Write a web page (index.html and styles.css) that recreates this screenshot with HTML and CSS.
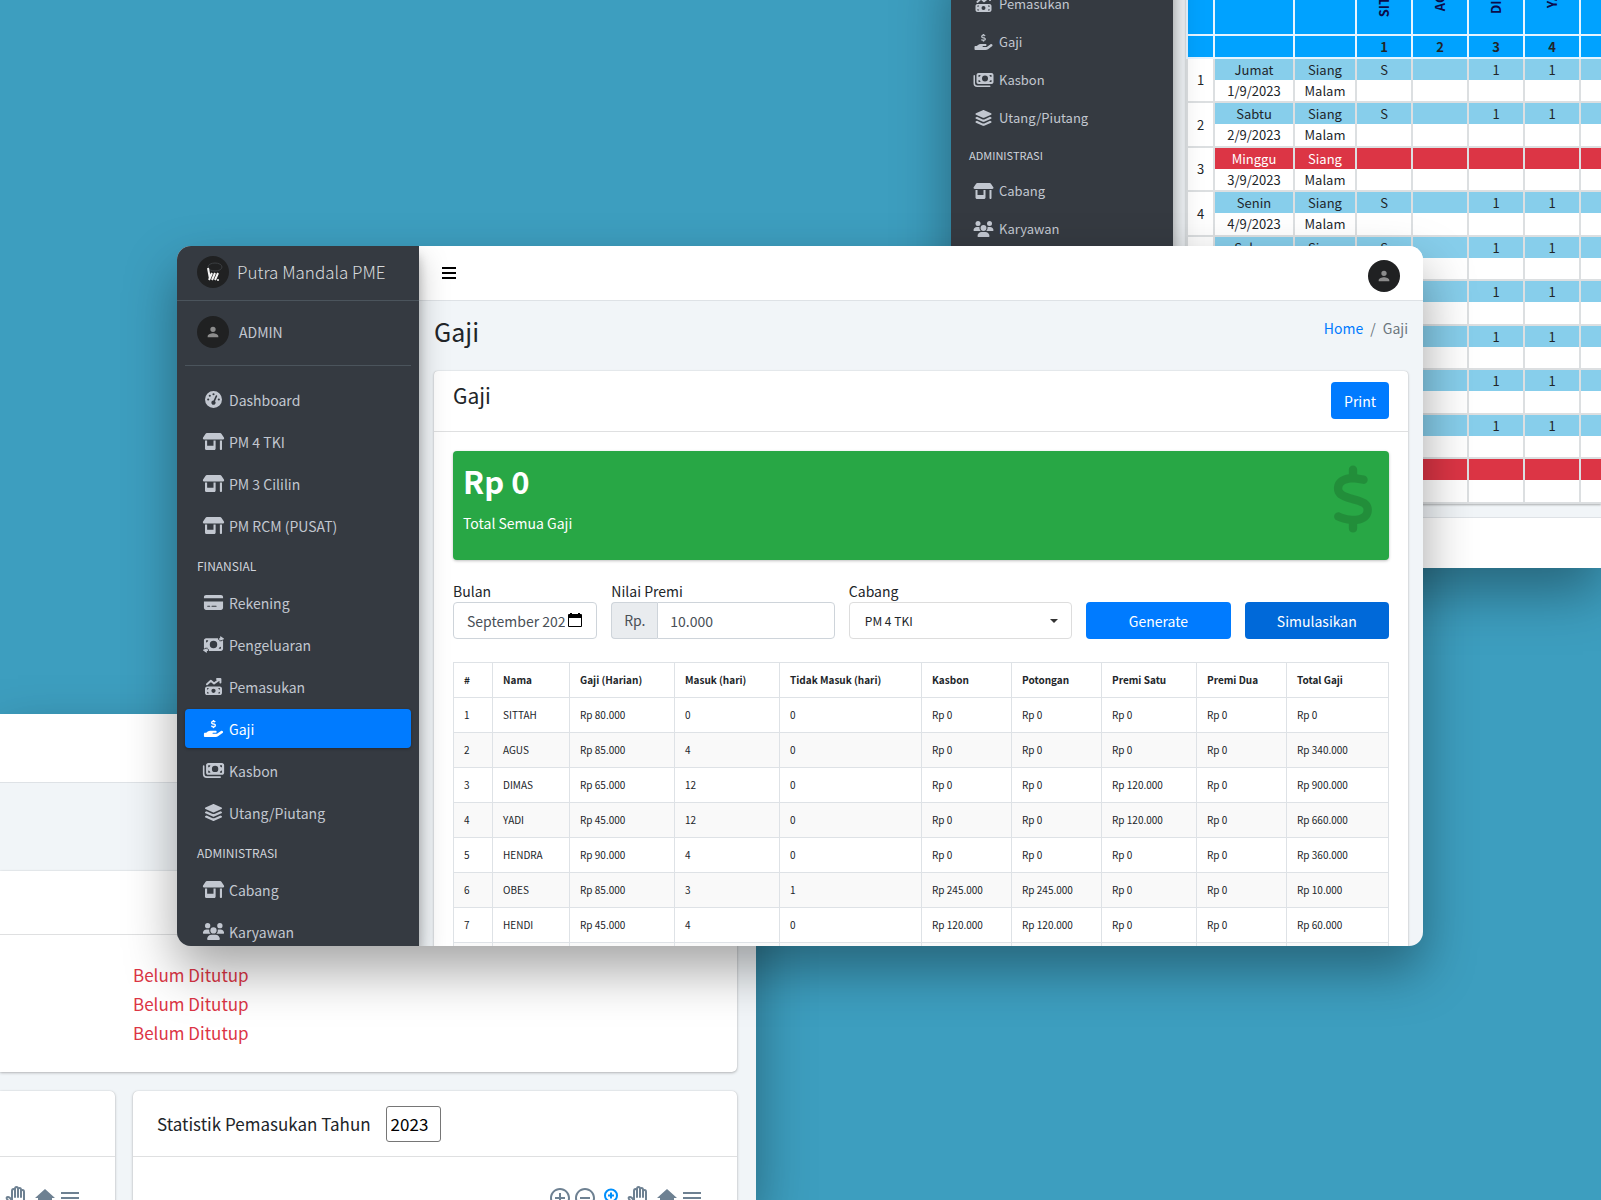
FILE: index.html
```html
<!DOCTYPE html>
<html lang="id">
<head>
<meta charset="utf-8">
<meta name="viewport" content="width=device-width, initial-scale=1">
<title>Putra Mandala PME - Gaji</title>
<link rel="stylesheet" href="styles.css">
</head>
<body>
<svg class="sprite" aria-hidden="true">
  <symbol id="i-gauge" viewBox="0 0 512 512"><path d="M0 256a256 256 0 1 1 512 0A256 256 0 1 1 0 256zM288 96a32 32 0 1 0 -64 0 32 32 0 1 0 64 0zM256 416c35.300 0 64-28.700 64-64c0-17.400-6.900-33.100-18.100-44.600L366 161.700c5.300-12.100-.2-26.300-12.300-31.600s-26.300 .2-31.600 12.300L257.900 288c-.6 0-1.300 0-1.900 0c-35.300 0-64 28.700-64 64s28.700 64 64 64zM176 144a32 32 0 1 0 -64 0 32 32 0 1 0 64 0zM96 288a32 32 0 1 0 0-64 32 32 0 1 0 0 64zm352-32a32 32 0 1 0 -64 0 32 32 0 1 0 64 0z"/></symbol>
  <symbol id="i-shop" viewBox="0 0 640 512"><path d="M36.800 192H603.200c20.300 0 36.800-16.500 36.800-36.800c0-7.300-2.200-14.400-6.200-20.400L558.200 21.400C549.300 8 534.400 0 518.300 0H121.700c-16 0-31 8-39.900 21.400L6.200 134.700c-4 6.100-6.200 13.200-6.200 20.400C0 175.500 16.500 192 36.800 192zM64 224V384v80c0 26.500 21.500 48 48 48H336c26.500 0 48-21.500 48-48V384 224H320V384H128V224H64zm448 0V480c0 17.700 14.300 32 32 32s32-14.300 32-32V224H512z"/></symbol>
  <symbol id="i-card" viewBox="0 0 576 512"><path d="M64 32C28.700 32 0 60.700 0 96v32H576V96c0-35.300-28.700-64-64-64H64zM576 224H0V416c0 35.300 28.700 64 64 64H512c35.300 0 64-28.700 64-64V224zM112 352h64c8.800 0 16 7.200 16 16s-7.200 16-16 16H112c-8.800 0-16-7.200-16-16s7.200-16 16-16zm112 16c0-8.800 7.200-16 16-16H368c8.800 0 16 7.200 16 16s-7.200 16-16 16H240c-8.800 0-16-7.200-16-16z"/></symbol>
  <symbol id="i-transfer" viewBox="0 0 640 512"><path fill-rule="evenodd" d="M96 64H455V112H500V160H560L592 130C604 140 608 150 608 160V384C608 419 579 448 544 448H185V400H140V352H80L48 382C36 372 32 362 32 352V128C32 93 61 64 96 64ZM96 128V192C131 192 160 163 160 128ZM544 384V320C509 320 480 349 480 384ZM320 144A112 112 0 1 0 320 368A112 112 0 1 0 320 144Z"/><path d="M535 7L631 79Q643 88 631 97L535 137Q520 143 520 125V112H500Q480 112 480 88T500 64H520V22Q520 2 535 7ZM105 375L9 415Q-3 424 9 433L105 505Q120 511 120 490V448H145Q165 448 165 424T145 400H120V387Q120 369 105 375Z"/></symbol>
  <symbol id="i-trend" viewBox="0 0 512 512"><path fill-rule="evenodd" d="M64 256H448C483 256 512 285 512 320V448C512 483 483 512 448 512H64C29 512 0 483 0 448V320C0 285 29 256 64 256ZM64 304V352C90 352 112 330 112 304ZM64 464H112C112 438 90 416 64 416ZM448 304H400C400 330 422 352 448 352ZM448 464V416C422 416 400 438 400 464ZM256 320A64 64 0 1 0 256 448A64 64 0 1 0 256 320Z"/><path fill="none" stroke="currentColor" stroke-width="60" stroke-linecap="round" stroke-linejoin="round" d="M60 190L176 86L272 166L440 42M362 30H464V132"/></symbol>
  <symbol id="i-dollar" viewBox="0 0 320 512"><path d="M160 0c17.700 0 32 14.300 32 32V67.700c1.600 .2 3.100 .4 4.700 .7c.4 .1 .7 .1 1.100 .2l48 8.800c17.400 3.200 28.900 19.900 25.700 37.200s-19.900 28.900-37.200 25.700l-47.500-8.700c-31.300-4.600-58.900-1.500-78.300 6.200s-27.200 18.300-29 28.100c-2 10.700-.5 16.700 1.200 20.400c1.800 3.900 5.500 8.300 12.800 13.200c16.300 10.700 41.300 17.700 73.700 26.300l2.900 .8c28.600 7.600 63.600 16.800 89.600 33.800c14.200 9.300 27.600 21.900 35.900 39.500c8.500 17.900 10.300 37.900 6.400 59.200c-6.900 38-33.100 63.400-65.600 76.700c-13.700 5.600-28.600 9.200-44.400 11V480c0 17.700-14.300 32-32 32s-32-14.300-32-32V445.100c-.4-.1-.9-.1-1.300-.2l-.2 0 0 0c-24.400-3.800-64.500-14.300-91.500-26.300c-16.100-7.200-23.400-26.100-16.200-42.200s26.100-23.400 42.200-16.200c20.900 9.300 55.300 18.500 75.200 21.600c31.900 4.700 58.200 2 76-5.300c16.900-6.900 24.600-16.900 26.800-28.900c1.900-10.600 .4-16.700-1.300-20.400c-1.900-4-5.600-8.400-13-13.300c-16.400-10.700-41.500-17.700-74-26.300l-2.800-.7 0 0C119.400 279.300 84.400 270 58.400 253c-14.200-9.300-27.500-22-35.800-39.600c-8.400-17.900-10.100-37.900-6.100-59.200C23.700 116 52.300 91.200 84.800 78.300c13.300-5.300 27.900-8.900 43.200-11V32c0-17.700 14.300-32 32-32z"/></symbol>
  <symbol id="i-hand" viewBox="0 0 576 512"><path d="M559.700 392.200c17.800-13.100 21.600-38.100 8.500-55.900s-38.100-21.600-55.900-8.500L392.600 416H272c-8.800 0-16-7.200-16-16s7.200-16 16-16h16 64c17.700 0 32-14.300 32-32s-14.300-32-32-32H288 272 193.700c-29.100 0-57.300 9.900-80 28L68.800 384H32c-17.700 0-32 14.300-32 32v64c0 17.700 14.300 32 32 32H192 352.500c29 0 57.300-9.300 80.700-26.500l126.600-93.300z"/><use href="#i-dollar" x="208" y="-6" width="160" height="256" stroke="currentColor" stroke-width="24"/></symbol>
  <symbol id="i-bills" viewBox="0 0 640 512"><path fill-rule="evenodd" d="M160 32H576C611 32 640 61 640 96V320C640 355 611 384 576 384H160C125 384 96 355 96 320V96C96 61 125 32 160 32ZM160 96V160C195 160 224 131 224 96ZM160 320H224C224 285 195 256 160 256ZM576 96H512C512 131 541 160 576 160ZM576 320V256C541 256 512 285 512 320ZM368 112A96 96 0 1 0 368 304A96 96 0 1 0 368 112Z"/><path fill="none" stroke="currentColor" stroke-width="48" stroke-linecap="round" d="M24 120V360Q24 456 120 456H520"/></symbol>
  <symbol id="i-layers" viewBox="0 0 512 512"><path d="M232.500 5.200c14.900-6.900 32.100-6.900 47 0l218.600 101c8.500 3.900 13.900 12.400 13.900 21.800s-5.400 17.900-13.900 21.800l-218.600 101c-14.900 6.900-32.100 6.900-47 0L13.900 149.800C5.400 145.800 0 137.300 0 128s5.400-17.900 13.900-21.800L232.500 5.200zM48.100 218.400l164.300 75.900c27.700 12.800 59.600 12.800 87.300 0l164.300-75.900 34.100 15.800c8.500 3.900 13.900 12.400 13.900 21.800s-5.400 17.900-13.900 21.800l-218.600 101c-14.900 6.900-32.100 6.900-47 0L13.900 277.800C5.400 273.800 0 265.300 0 256s5.400-17.900 13.900-21.800l34.200-15.800zM13.900 362.200l34.200-15.800 164.300 75.900c27.700 12.800 59.600 12.800 87.300 0l164.300-75.900 34.100 15.800c8.500 3.900 13.900 12.400 13.900 21.800s-5.400 17.900-13.900 21.800l-218.600 101c-14.900 6.900-32.100 6.900-47 0L13.900 405.800C5.400 401.800 0 393.300 0 384s5.400-17.900 13.900-21.800z"/></symbol>
  <symbol id="i-users" viewBox="0 0 640 512"><circle cx="144" cy="80" r="80"/><circle cx="512" cy="80" r="80"/><circle cx="320" cy="224" r="94"/><path d="M0 299C0 240 48 192 107 192H149C165 192 180 195 194 202C184 250 202 294 236 320H21C10 320 0 310 0 299ZM404 320C438 294 456 250 446 202C460 195 475 192 491 192H533C592 192 640 240 640 299C640 310 630 320 619 320ZM128 485C128 412 188 352 261 352H379C452 352 512 412 512 485C512 500 500 512 485 512H155C140 512 128 500 128 485Z"/></symbol>
  <symbol id="i-user" viewBox="0 0 24 24"><path d="M12 12a4 4 0 1 0 0-8 4 4 0 0 0 0 8zm0 2c-3 0-8 1.500-8 4.500V20h16v-1.500c0-3-5-4.500-8-4.500z"/></symbol>
  <symbol id="i-bars" viewBox="0 0 14 12"><path d="M0 0h14v2H0zM0 5h14v2H0zM0 10h14v2H0z"/></symbol>
  <symbol id="i-calendar" viewBox="0 0 14 14"><path fill-rule="evenodd" d="M2 0H4V1H10V0H12V1H13Q14 1 14 2V13Q14 14 13 14H1Q0 14 0 13V2Q0 1 1 1H2ZM1 5V13H13V5Z"/></symbol>
  <symbol id="i-plus" viewBox="0 0 24 24"><path d="M13 7h-2v4H7v2h4v4h2v-4h4v-2h-4V7zm-1-5C6.500 2 2 6.500 2 12s4.500 10 10 10 10-4.500 10-10S17.500 2 12 2zm0 18c-4.400 0-8-3.600-8-8s3.600-8 8-8 8 3.600 8 8-3.600 8-8 8z"/></symbol>
  <symbol id="i-minus" viewBox="0 0 24 24"><path d="M7 11v2h10v-2H7zm5-9C6.500 2 2 6.500 2 12s4.500 10 10 10 10-4.500 10-10S17.500 2 12 2zm0 18c-4.400 0-8-3.600-8-8s3.600-8 8-8 8 3.600 8 8-3.600 8-8 8z"/></symbol>
  <symbol id="i-zoom" viewBox="0 0 24 24"><path fill="none" stroke="currentColor" stroke-width="2" d="M16 15L21 21M11 6.500V12.500M8 9.500H14M11 3.500a6 6 0 1 0 0 12a6 6 0 1 0 0-12Z"/></symbol>
  <symbol id="i-pan" viewBox="0 0 24 24"><path fill="none" stroke="currentColor" stroke-width="2" stroke-linejoin="round" d="M8 15V5Q8 3 9.500 3T11 5V11V3Q11 1 12.500 1T14 3V11V3Q14 2 15.500 2T17 4V11V5Q17 4 18.500 4T20 6V16Q20 23 13 23Q9 23 7 19L3 13Q2 11 4 11Q6 11 8 15"/></symbol>
  <symbol id="i-home" viewBox="0 0 24 24"><path d="M10 20v-6h4v6h5v-8h3L12 3 2 12h3v8z"/></symbol>
  <symbol id="i-menu" viewBox="0 0 24 24"><path d="M3 18h18v-2H3v2zm0-5h18v-2H3v2zm0-7v2h18V6H3z"/></symbol>
</svg>

<div class="desktop">

  <section class="window window-stats">
    <div class="topbar"></div>
    <div class="stats-body">
      <div class="panel status-panel">
        <div class="panel-head"></div>
        <ul class="status-list">
          <li>Belum Ditutup</li>
          <li>Belum Ditutup</li>
          <li>Belum Ditutup</li>
        </ul>
      </div>
      <div class="charts">
        <div class="panel chart-left">
          <div class="panel-head"></div>
          <div class="tools">
            <svg class="tool tool-pan"><use href="#i-pan"/></svg>
            <svg class="tool"><use href="#i-home"/></svg>
            <svg class="tool"><use href="#i-menu"/></svg>
          </div>
        </div>
        <div class="panel chart-right">
          <div class="panel-head">
            <label for="tahun">Statistik Pemasukan Tahun</label>
            <input class="year" id="tahun" type="text" value="2023">
          </div>
          <div class="tools">
            <svg class="tool"><use href="#i-plus"/></svg>
            <svg class="tool"><use href="#i-minus"/></svg>
            <svg class="tool tool-on"><use href="#i-zoom"/></svg>
            <svg class="tool tool-pan"><use href="#i-pan"/></svg>
            <svg class="tool"><use href="#i-home"/></svg>
            <svg class="tool"><use href="#i-menu"/></svg>
          </div>
        </div>
      </div>
    </div>
  </section>

  <section class="window window-absen">
    <nav class="sidebar">
      <ul class="nav">
        <li><a class="nav-link" href="#"><svg class="icon"><use href="#i-trend"/></svg>Pemasukan</a></li>
        <li><a class="nav-link" href="#"><svg class="icon"><use href="#i-hand"/></svg>Gaji</a></li>
        <li><a class="nav-link" href="#"><svg class="icon"><use href="#i-bills"/></svg>Kasbon</a></li>
        <li><a class="nav-link" href="#"><svg class="icon"><use href="#i-layers"/></svg>Utang/Piutang</a></li>
        <li class="nav-header">ADMINISTRASI</li>
        <li><a class="nav-link" href="#"><svg class="icon"><use href="#i-shop"/></svg>Cabang</a></li>
        <li><a class="nav-link" href="#"><svg class="icon"><use href="#i-users"/></svg>Karyawan</a></li>
      </ul>
    </nav>
    <div class="absen-main">
      <div class="absen-scroll">
        <table class="absen">
          <colgroup><col class="a-no"><col class="a-day"><col class="a-shift"><col class="a-p"><col class="a-p"><col class="a-p"><col class="a-p"><col class="a-p"></colgroup>
          <thead>
            <tr class="names"><th></th><th></th><th></th><th><span>SITTAH</span></th><th><span>AGUS</span></th><th><span>DIMAS</span></th><th><span>YADI</span></th><th></th></tr>
            <tr class="nums"><th></th><th></th><th></th><th>1</th><th>2</th><th>3</th><th>4</th><th></th></tr>
          </thead>
          <tbody>
            <tr class="day"><td rowspan="2">1</td><td>Jumat</td><td>Siang</td><td>S</td><td></td><td>1</td><td>1</td><td></td></tr>
            <tr class="night"><td>1/9/2023</td><td>Malam</td><td></td><td></td><td></td><td></td><td></td></tr>
            <tr class="day"><td rowspan="2">2</td><td>Sabtu</td><td>Siang</td><td>S</td><td></td><td>1</td><td>1</td><td></td></tr>
            <tr class="night"><td>2/9/2023</td><td>Malam</td><td></td><td></td><td></td><td></td><td></td></tr>
            <tr class="day off"><td rowspan="2">3</td><td>Minggu</td><td>Siang</td><td></td><td></td><td></td><td></td><td></td></tr>
            <tr class="night"><td>3/9/2023</td><td>Malam</td><td></td><td></td><td></td><td></td><td></td></tr>
            <tr class="day"><td rowspan="2">4</td><td>Senin</td><td>Siang</td><td>S</td><td></td><td>1</td><td>1</td><td></td></tr>
            <tr class="night"><td>4/9/2023</td><td>Malam</td><td></td><td></td><td></td><td></td><td></td></tr>
            <tr class="day"><td rowspan="2"></td><td>Selasa</td><td>Siang</td><td>S</td><td></td><td>1</td><td>1</td><td></td></tr>
            <tr class="night"><td></td><td></td><td></td><td></td><td></td><td></td><td></td></tr>
            <tr class="day"><td rowspan="2"></td><td></td><td></td><td></td><td></td><td>1</td><td>1</td><td></td></tr>
            <tr class="night"><td></td><td></td><td></td><td></td><td></td><td></td><td></td></tr>
            <tr class="day"><td rowspan="2"></td><td></td><td></td><td></td><td></td><td>1</td><td>1</td><td></td></tr>
            <tr class="night"><td></td><td></td><td></td><td></td><td></td><td></td><td></td></tr>
            <tr class="day"><td rowspan="2"></td><td></td><td></td><td></td><td></td><td>1</td><td>1</td><td></td></tr>
            <tr class="night"><td></td><td></td><td></td><td></td><td></td><td></td><td></td></tr>
            <tr class="day"><td rowspan="2"></td><td></td><td></td><td></td><td></td><td>1</td><td>1</td><td></td></tr>
            <tr class="night"><td></td><td></td><td></td><td></td><td></td><td></td><td></td></tr>
            <tr class="day off"><td rowspan="2"></td><td></td><td></td><td></td><td></td><td></td><td></td><td></td></tr>
            <tr class="night"><td></td><td></td><td></td><td></td><td></td><td></td><td></td></tr>
          </tbody>
        </table>
      </div>
      <footer class="absen-footer"></footer>
    </div>
  </section>

  <section class="window window-gaji">
    <nav class="sidebar">
      <a class="brand" href="#">
        <svg class="brand-logo" viewBox="0 0 32 32"><circle cx="16" cy="16" r="16" fill="#202122"/><ellipse cx="18" cy="11" rx="7" ry="4" fill="none" stroke="#3b3e41"/><path d="M11 12L13 23M15 17L12 24M18 17L15 24M21 17L18 24" stroke="#f4f4f4" stroke-width="2" fill="none"/><circle cx="21" cy="24" r="1" fill="#f4f4f4"/></svg>
        Putra Mandala PME
      </a>
      <a class="user" href="#"><span class="avatar"><svg><use href="#i-user"/></svg></span>ADMIN</a>
      <ul class="nav">
        <li><a class="nav-link" href="#"><svg class="icon"><use href="#i-gauge"/></svg>Dashboard</a></li>
        <li><a class="nav-link" href="#"><svg class="icon"><use href="#i-shop"/></svg>PM 4 TKI</a></li>
        <li><a class="nav-link" href="#"><svg class="icon"><use href="#i-shop"/></svg>PM 3 Cililin</a></li>
        <li><a class="nav-link" href="#"><svg class="icon"><use href="#i-shop"/></svg>PM RCM (PUSAT)</a></li>
        <li class="nav-header">FINANSIAL</li>
        <li><a class="nav-link" href="#"><svg class="icon"><use href="#i-card"/></svg>Rekening</a></li>
        <li><a class="nav-link" href="#"><svg class="icon"><use href="#i-transfer"/></svg>Pengeluaran</a></li>
        <li><a class="nav-link" href="#"><svg class="icon"><use href="#i-trend"/></svg>Pemasukan</a></li>
        <li><a class="nav-link active" href="#"><svg class="icon"><use href="#i-hand"/></svg>Gaji</a></li>
        <li><a class="nav-link" href="#"><svg class="icon"><use href="#i-bills"/></svg>Kasbon</a></li>
        <li><a class="nav-link" href="#"><svg class="icon"><use href="#i-layers"/></svg>Utang/Piutang</a></li>
        <li class="nav-header">ADMINISTRASI</li>
        <li><a class="nav-link" href="#"><svg class="icon"><use href="#i-shop"/></svg>Cabang</a></li>
        <li><a class="nav-link" href="#"><svg class="icon"><use href="#i-users"/></svg>Karyawan</a></li>
      </ul>
    </nav>

    <main class="main">
      <header class="main-header">
        <button class="toggle" type="button" aria-label="Menu"><svg><use href="#i-bars"/></svg></button>
        <span class="avatar"><svg><use href="#i-user"/></svg></span>
      </header>
      <div class="page-head">
        <h1>Gaji</h1>
        <nav class="crumbs"><a href="#">Home</a><span>/</span><span>Gaji</span></nav>
      </div>
      <div class="card">
        <div class="card-head">
          <h2>Gaji</h2>
          <button class="btn" type="button">Print</button>
        </div>
        <div class="card-body">
          <div class="total">
            <div>
              <p class="total-value">Rp 0</p>
              <p class="total-label">Total Semua Gaji</p>
            </div>
            <svg class="total-icon"><use href="#i-dollar"/></svg>
          </div>
          <form class="filters">
            <div class="field narrow">
              <label for="bulan">Bulan</label>
              <div class="month"><input class="control" id="bulan" type="text" value="September 2023"><svg><use href="#i-calendar"/></svg></div>
            </div>
            <div class="field wide">
              <label for="premi">Nilai Premi</label>
              <div class="group"><span class="addon">Rp.</span><input class="control" id="premi" type="text" value="10.000"></div>
            </div>
            <div class="field wide">
              <label for="cabang">Cabang</label>
              <div class="picker"><select class="control" id="cabang"><option>PM 4 TKI</option></select></div>
            </div>
            <div class="field narrow"><button class="btn" type="button">Generate</button></div>
            <div class="field narrow"><button class="btn pressed" type="button">Simulasikan</button></div>
          </form>
          <table class="payroll">
            <colgroup><col class="c-no"><col class="c-nama"><col class="c-gaji"><col class="c-gaji"><col class="c-tidak"><col class="c-rp"><col class="c-rp"><col class="c-satu"><col class="c-rp"><col class="c-total"></colgroup>
            <thead>
              <tr><th>#</th><th>Nama</th><th>Gaji (Harian)</th><th>Masuk (hari)</th><th>Tidak Masuk (hari)</th><th>Kasbon</th><th>Potongan</th><th>Premi Satu</th><th>Premi Dua</th><th>Total Gaji</th></tr>
            </thead>
            <tbody>
              <tr><td>1</td><td>SITTAH</td><td>Rp 80.000</td><td>0</td><td>0</td><td>Rp 0</td><td>Rp 0</td><td>Rp 0</td><td>Rp 0</td><td>Rp 0</td></tr>
              <tr><td>2</td><td>AGUS</td><td>Rp 85.000</td><td>4</td><td>0</td><td>Rp 0</td><td>Rp 0</td><td>Rp 0</td><td>Rp 0</td><td>Rp 340.000</td></tr>
              <tr><td>3</td><td>DIMAS</td><td>Rp 65.000</td><td>12</td><td>0</td><td>Rp 0</td><td>Rp 0</td><td>Rp 120.000</td><td>Rp 0</td><td>Rp 900.000</td></tr>
              <tr><td>4</td><td>YADI</td><td>Rp 45.000</td><td>12</td><td>0</td><td>Rp 0</td><td>Rp 0</td><td>Rp 120.000</td><td>Rp 0</td><td>Rp 660.000</td></tr>
              <tr><td>5</td><td>HENDRA</td><td>Rp 90.000</td><td>4</td><td>0</td><td>Rp 0</td><td>Rp 0</td><td>Rp 0</td><td>Rp 0</td><td>Rp 360.000</td></tr>
              <tr><td>6</td><td>OBES</td><td>Rp 85.000</td><td>3</td><td>1</td><td>Rp 245.000</td><td>Rp 245.000</td><td>Rp 0</td><td>Rp 0</td><td>Rp 10.000</td></tr>
              <tr><td>7</td><td>HENDI</td><td>Rp 45.000</td><td>4</td><td>0</td><td>Rp 120.000</td><td>Rp 120.000</td><td>Rp 0</td><td>Rp 0</td><td>Rp 60.000</td></tr>
              <tr><td></td><td></td><td></td><td></td><td></td><td></td><td></td><td></td><td></td><td></td></tr>
            </tbody>
          </table>
        </div>
      </div>
    </main>
  </section>
</div>
</body>
</html>
```
FILE: styles.css
```css
* { box-sizing: border-box; }

body {
  margin: 0;
  font-family: "Noto Sans CJK JP", "Noto Sans", sans-serif;
  font-size: 14px;
  line-height: 20px;
  color: #212529;
}

ul, p, h1, h2 { margin: 0; padding: 0; list-style: none; font-weight: 400; }
a { color: inherit; text-decoration: none; }
button, input, select { font: inherit; }
svg { fill: currentColor; display: block; flex: none; }
.sprite { position: absolute; width: 0; height: 0; }

.desktop {
  position: relative;
  min-height: 100vh;
  overflow: hidden;
  background: #3d9ebf;
}

/* Windows on the desktop */
.window {
  position: absolute;
  isolation: isolate;
  display: flex;
  overflow: hidden;
  background: #f1f5f8;
  box-shadow: 0 24px 52px rgba(0, 0, 0, .36);
}
.window-stats { left: 0; top: 714px; bottom: 0; width: 756px; flex-direction: column; }
.window-absen { left: 951px; right: 0; top: -51px; }
.window-gaji { left: 177px; right: 178px; top: 246px; bottom: 254px; border-radius: 14px; }

/* Sidebar */
.sidebar {
  position: relative;
  z-index: 2;
  flex: none;
  width: 242px;
  background: #353a41;
  color: #c2c7d0;
  box-shadow: 0 14px 28px rgba(0, 0, 0, .25), 0 10px 10px rgba(0, 0, 0, .22);
}
.brand {
  display: flex;
  align-items: center;
  gap: 8px;
  height: 55px;
  padding: 0 20px 2px;
  border-bottom: 1px solid #4b545c;
  font-size: 17px;
  font-weight: 300;
  color: #d8dadc;
}
.brand-logo { width: 32px; height: 32px; }
.user {
  display: flex;
  align-items: center;
  gap: 10px;
  height: 65px;
  margin: 0 8px 14px;
  padding: 0 0 2px 12px;
  border-bottom: 1px solid #4b545c;
}
.avatar {
  display: flex;
  align-items: center;
  justify-content: center;
  width: 32px;
  height: 32px;
  border-radius: 50%;
  background: #202122;
  color: #8c8c8c;
}
.avatar svg { width: 16px; height: 16px; }
.nav { padding: 0 8px; }
.nav-link {
  display: flex;
  align-items: center;
  gap: 3px;
  height: 39px;
  margin-bottom: 3px;
  padding-left: 16px;
  border-radius: 4px;
}
.nav-link.active {
  background: #007bff;
  color: #fff;
  box-shadow: 0 1px 3px rgba(0, 0, 0, .3);
}
.icon { width: 25px; height: 17px; }
.nav-header {
  padding: 0 12px;
  font-size: 12px;
  line-height: 35px;
  color: #d0d4db;
}

/* Main column */
.main { flex: 1; min-width: 0; }
.main-header {
  display: flex;
  align-items: center;
  justify-content: space-between;
  height: 55px;
  padding: 0 23px;
  background: #fff;
  border-bottom: 1px solid #dee2e6;
}
.main-header .avatar { margin-top: 6px; }
.toggle { padding: 0; border: 0; background: none; color: #000; }
.toggle svg { width: 14px; height: 12px; }
.page-head {
  display: flex;
  justify-content: space-between;
  align-items: flex-start;
  padding: 12px 15px 22px;
}
h1 { font-size: 25px; line-height: 36px; }
.crumbs { display: flex; gap: 7px; line-height: 30px; color: #6c757d; }
.crumbs a { color: #007bff; }
.card {
  margin: 0 15px;
  border-radius: 4px;
  background: #fff;
  box-shadow: 0 0 1px rgba(0, 0, 0, .25), 0 1px 3px rgba(0, 0, 0, .2);
}
.card-head {
  display: flex;
  justify-content: space-between;
  align-items: flex-start;
  height: 61px;
  padding: 11px 19px;
  border-bottom: 1px solid #dfe0e1;
}
h2 { font-size: 21px; line-height: 26px; }
.btn {
  height: 37px;
  padding: 0 13px;
  border: 0;
  border-radius: 4px;
  background: #007bff;
  color: #fff;
}
.btn.pressed { background: #0069d9; }
.card-body { padding: 19px; }
.total {
  display: flex;
  justify-content: space-between;
  height: 109px;
  padding: 10px 15px 0 10px;
  border-radius: 4px;
  background: #28a745;
  color: #fff;
  box-shadow: 0 1px 3px rgba(0, 0, 0, .25);
}
.total-value { font-size: 31px; line-height: 40px; font-weight: 700; }
.total-label { margin-top: 12px; }
.total-icon { width: 42px; height: 68px; margin-top: 4px; color: rgba(0, 0, 0, .15); }

.filters { display: flex; align-items: flex-end; margin: 20px -7px 23px; }
.field { padding: 0 7px; }
.narrow { flex: 0 0 16.6667%; min-width: 0; }
.wide { flex: 0 0 25%; min-width: 0; }
.field label { display: block; line-height: 22px; }
.field .btn { width: 100%; }
.control {
  display: block;
  width: 100%;
  height: 37px;
  padding: 0 12px;
  border: 1px solid #ced4da;
  border-radius: 4px;
  background: #fff;
  color: #495057;
}
.month { position: relative; }
.month .control { padding: 0 31px 0 13px; }
.month svg { position: absolute; right: 15px; top: 11px; width: 14px; height: 14px; color: #000; }
.group { display: flex; }
.group .control { flex: 1; min-width: 0; border-radius: 0 4px 4px 0; }
.addon {
  flex: none;
  width: 46px;
  border: 1px solid #ced4da;
  border-right: 0;
  border-radius: 4px 0 0 4px;
  background: #e9ecef;
  color: #495057;
  line-height: 35px;
  text-align: center;
}
.picker { position: relative; }
.picker .control { appearance: none; padding: 0 15px; border-color: #ddd; font-size: 12px; color: #212529; }
.picker::after {
  content: "";
  position: absolute;
  right: 14px;
  top: 17px;
  border: 4px solid transparent;
  border-top-color: #333;
  border-bottom: 0;
}

.payroll { width: 100%; table-layout: fixed; border-collapse: collapse; font-size: 10px; }
.payroll th, .payroll td {
  height: 35px;
  padding: 0 0 0 10px;
  border: 1px solid #dee2e6;
  text-align: left;
  white-space: nowrap;
}
.payroll tbody tr:nth-child(even) { background: #f9f9f9; }
.c-no { width: 39px; }
.c-nama { width: 77px; }
.c-gaji { width: 105px; }
.c-tidak { width: 142px; }
.c-rp { width: 90px; }
.c-satu { width: 95px; }
.c-total { width: 102px; }

/* Attendance window */
.window-absen .sidebar { width: 222px; padding-top: 37px; font-size: 13px; }
.window-absen .nav-link { height: 35px; padding-left: 12px; }
.window-absen .icon { height: 16px; }
.window-absen .nav-header { font-size: 11px; line-height: 35px; padding: 0 10px; }
.absen-main { flex: 1; min-width: 0; overflow: hidden; padding-left: 13px; }
.absen-scroll { overflow: hidden; box-shadow: 0 1px 2px rgba(0, 0, 0, .3); }
.absen {
  table-layout: fixed;
  width: 449px;
  border-collapse: collapse;
  background: #fff;
  font-size: 13px;
  line-height: 20px;
  text-align: center;
}
.absen th, .absen td { padding: 0; border: 2px solid #dcdfe1; }
.absen th { background: #00a2ff; border-color: #e6f4ff; }
.absen .names { height: 85px; }
.absen .names th { padding-top: 8px; }
.absen tr { height: 22px; }
.absen .nums { height: 23px; }
.absen .night:nth-child(4n) { height: 23px; }
.names span { display: inline-block; writing-mode: vertical-rl; transform: rotate(180deg); color: #0b0b4a; }
.absen .day td { border-bottom-width: 0; background: #87ceeb; }
.absen .day td[rowspan] { background: #fff; border-bottom-width: 2px; color: #212529; }
.absen .off td { background: #dc3545; color: #fff; }
.absen .night td { border-top-width: 0; }
.a-no { width: 27px; }
.a-day { width: 80px; }
.a-shift { width: 62px; }
.a-p { width: 56px; }
.absen-footer { height: 51px; margin: 13px 0 0 -13px; background: #fff; border-top: 1px solid #dee2e6; }

/* Statistics window */
.topbar { flex: none; height: 69px; background: #fff; border-bottom: 1px solid #dee2e6; }
.stats-body { padding: 88px 19px 0 0; font-size: 17px; }
.panel { background: #fff; border-radius: 5px; box-shadow: 0 0 1px rgba(0, 0, 0, .2), 0 1px 3px rgba(0, 0, 0, .25); }
.panel-head { display: flex; align-items: center; gap: 15px; height: 66px; padding: 0 24px; border-bottom: 1px solid #dfe0e1; }
.status-panel { height: 201px; margin-bottom: 19px; border-radius: 0 0 5px 0; }
.status-panel .panel-head { height: 64px; }
.status-list { padding: 25px 0 0 133px; line-height: 29px; color: #dc3545; }
.charts { display: flex; gap: 18px; }
.chart-left { flex: 0 0 115px; min-width: 0; border-radius: 0 5px 5px 0; }
.chart-right { flex: 1; }
.year { width: 55px; height: 36px; padding: 0 4px; border: 1px solid #767676; border-radius: 3px; color: #000; }
.tools { display: flex; justify-content: flex-end; align-items: center; gap: 1px; height: 82px; padding-right: 33px; color: #6e8192; }
.chart-left .panel-head { padding: 0; }
.tool { width: 24px; height: 24px; }
.tool-pan { margin: 0 4px 0 1px; }
.tool-on { margin-left: 2px; color: #008ffb; }
```
